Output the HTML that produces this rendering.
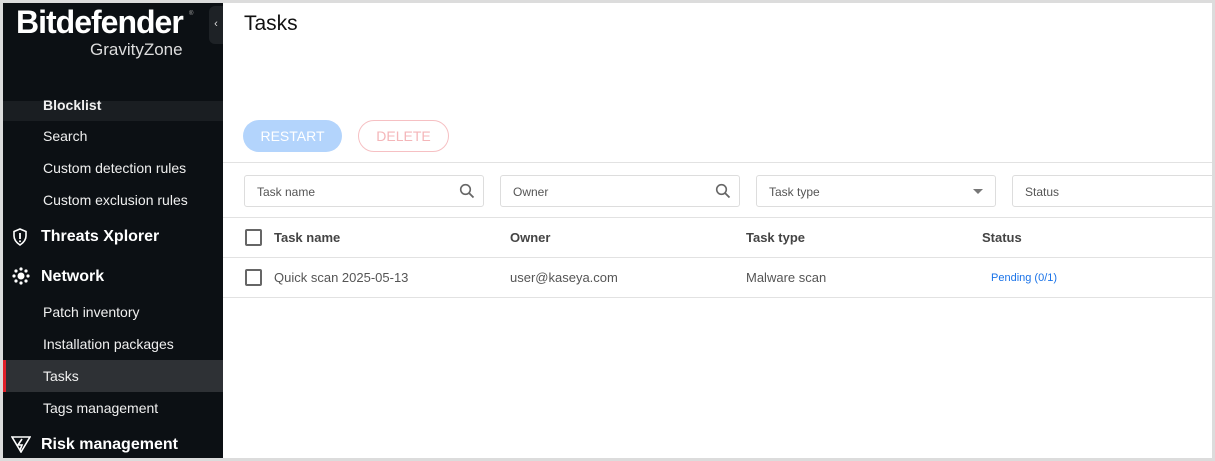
<!DOCTYPE html>
<html><head><style>
*{box-sizing:border-box;margin:0;padding:0}
body{width:1215px;height:461px;background:#dcdcdc;position:relative;overflow:hidden;font-family:"Liberation Sans",sans-serif}
#side{position:absolute;left:3px;top:3px;width:220px;height:455px;background:#0c1014;color:#fff;overflow:hidden}
#main{position:absolute;left:223px;top:3px;width:989px;height:455px;background:#fff;overflow:hidden}
.sub{position:absolute;left:40px;font-size:14px;color:#f0f0f0}
.hd{position:absolute;left:38px;font-size:16px;font-weight:bold;color:#fff}
.t{position:absolute;font-size:13px;color:#555}
.hline{position:absolute;left:0;width:989px;height:1px;background:#e2e2e2}
.inp{position:absolute;top:172px;height:32px;border:1px solid #ddd;border-radius:3px;font-size:12px;color:#555;padding:9px 12px}
.cb{position:absolute;left:22px;width:17px;height:17px;border:2px solid #666;border-radius:2px}
</style></head><body>
<div id="side">
 <div style="position:absolute;left:13px;top:1px;font-size:32px;font-weight:bold;letter-spacing:-1px">Bitdefender</div>
 <div style="position:absolute;left:186px;top:8px;font-size:6px;color:#aaa">®</div>
 <div style="position:absolute;left:87px;top:37px;font-size:17px;color:#ddd">GravityZone</div>
 <div style="position:absolute;left:206px;top:3px;width:14px;height:38px;background:#1e2226;border-radius:6px 0 0 6px;font-size:11px;color:#ddd;text-align:center;line-height:36px">‹</div>
 <div style="position:absolute;left:0;top:98px;width:220px;height:20px;background:#1a1e22"></div>
 <div class="sub" style="top:94px;font-weight:bold">Blocklist</div>
 <div class="sub" style="top:125px">Search</div>
 <div class="sub" style="top:157px">Custom detection rules</div>
 <div class="sub" style="top:189px">Custom exclusion rules</div>
 <svg style="position:absolute;left:9px;top:225px" width="16" height="18" viewBox="0 0 16 18"><path d="M8 1L2 3.5V8c0 4 3 7 6 9 3-2 6-5 6-9V3.5z" fill="none" stroke="#fff" stroke-width="1.6"/><path d="M8 5v6" stroke="#fff" stroke-width="1.8"/><circle cx="8" cy="13.3" r="1" fill="#fff"/></svg>
 <div class="hd" style="top:225px">Threats Xplorer</div>
 <svg style="position:absolute;left:9px;top:264px" width="18" height="18" viewBox="0 0 18 18"><circle cx="9" cy="9" r="3.5" fill="#fff"/><g fill="#fff"><circle cx="9" cy="2" r="1.6"/><circle cx="9" cy="16" r="1.6"/><circle cx="2" cy="9" r="1.6"/><circle cx="16" cy="9" r="1.6"/><circle cx="4" cy="4" r="1.6"/><circle cx="14" cy="4" r="1.6"/><circle cx="4" cy="14" r="1.6"/><circle cx="14" cy="14" r="1.6"/></g></svg>
 <div class="hd" style="top:265px">Network</div>
 <div class="sub" style="top:301px">Patch inventory</div>
 <div class="sub" style="top:333px">Installation packages</div>
 <div style="position:absolute;left:0;top:357px;width:220px;height:32px;background:#2e3135"></div>
 <div style="position:absolute;left:0;top:357px;width:3px;height:32px;background:#e0202a"></div>
 <div class="sub" style="top:365px">Tasks</div>
 <div class="sub" style="top:397px">Tags management</div>
 <svg style="position:absolute;left:8px;top:432px" width="20" height="18" viewBox="0 0 20 18"><path d="M1 2h18L10 17z" fill="none" stroke="#fff" stroke-width="1.6"/><path d="M11 4L7 10h4l-2 5" fill="none" stroke="#fff" stroke-width="1.6"/></svg>
 <div class="hd" style="top:433px">Risk management</div>
</div>
<div id="main">
 <div style="position:absolute;left:21px;top:9px;font-size:21px;color:#111">Tasks</div>
 <div style="position:absolute;left:20px;top:117px;width:99px;height:32px;border-radius:16px;background:#b3d4fc;color:#fff;font-size:14px;text-align:center;line-height:32px">RESTART</div>
 <div style="position:absolute;left:135px;top:117px;width:91px;height:32px;border-radius:16px;border:1px solid #f6c0c3;color:#f4b6b9;font-size:14px;text-align:center;line-height:30px">DELETE</div>
 <div class="hline" style="top:159px"></div>
 <div class="inp" style="left:21px;width:240px">Task name<svg style="position:absolute;right:8px;top:7px" width="16" height="16" viewBox="0 0 16 16"><circle cx="6.5" cy="6.5" r="4.8" fill="none" stroke="#666" stroke-width="1.6"/><path d="M10 10l4.5 4.5" stroke="#666" stroke-width="1.8"/></svg></div>
 <div class="inp" style="left:277px;width:240px">Owner<svg style="position:absolute;right:8px;top:7px" width="16" height="16" viewBox="0 0 16 16"><circle cx="6.5" cy="6.5" r="4.8" fill="none" stroke="#666" stroke-width="1.6"/><path d="M10 10l4.5 4.5" stroke="#666" stroke-width="1.8"/></svg></div>
 <div class="inp" style="left:533px;width:240px">Task type<div style="position:absolute;right:12px;top:13px;border-left:5px solid transparent;border-right:5px solid transparent;border-top:5px solid #777"></div></div>
 <div class="inp" style="left:789px;width:210px">Status</div>
 <div class="hline" style="top:214px"></div>
 <div class="cb" style="top:226px"></div>
 <div class="t" style="left:51px;top:227px;font-weight:bold;color:#444">Task name</div>
 <div class="t" style="left:287px;top:227px;font-weight:bold;color:#444">Owner</div>
 <div class="t" style="left:523px;top:227px;font-weight:bold;color:#444">Task type</div>
 <div class="t" style="left:759px;top:227px;font-weight:bold;color:#444">Status</div>
 <div class="hline" style="top:254px"></div>
 <div class="cb" style="top:266px"></div>
 <div class="t" style="left:51px;top:267px">Quick scan 2025-05-13</div>
 <div class="t" style="left:287px;top:267px">user@kaseya.com</div>
 <div class="t" style="left:523px;top:267px">Malware scan</div>
 <div class="t" style="left:768px;top:269px;font-size:11px;color:#1a73e8">Pending (0/1)</div>
 <div class="hline" style="top:294px"></div>
</div>
</body></html>
